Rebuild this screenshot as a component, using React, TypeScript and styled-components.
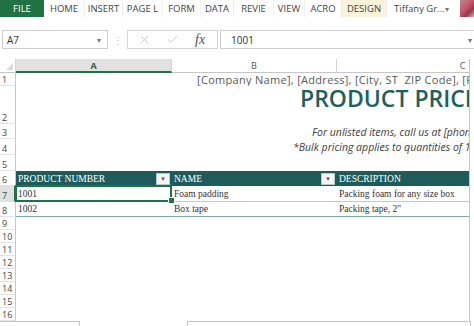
import styled, { createGlobalStyle } from "styled-components";
import { X, Check } from "lucide-react";

const GlobalStyle = createGlobalStyle`
  html, body {
    margin: 0;
    padding: 0;
    background: #ffffff;
    overflow: hidden;
  }
`;

const TEAL = "#1e5c5c";
const GREEN = "#217346";

const tabs = [
  { label: "HOME", w: 41 },
  { label: "INSERT", w: 38 },
  { label: "PAGE L", w: 40 },
  { label: "FORM", w: 38 },
  { label: "DATA", w: 33 },
  { label: "REVIE", w: 40 },
  { label: "VIEW", w: 31 },
  { label: "ACRO", w: 37 },
  { label: "DESIGN", w: 45, active: true },
];

const rowHeights = [13, 38, 15, 16, 16, 15, 16, 15, 13, 13, 13, 13, 13, 13, 13, 13];

export default function App() {
  return (
    <Screen>
      <GlobalStyle />
      <Ribbon>
        <FileTab>FILE</FileTab>
        {tabs.map((t) => (
          <Tab key={t.label} $w={t.w} $active={t.active}>
            {t.label}
          </Tab>
        ))}
        <UserName>Tiffany Gr...</UserName>
        <SmallArrow>▾</SmallArrow>
        <Avatar />
      </Ribbon>

      <FormulaRow>
        <NameBox>
          <span>A7</span>
          <SmallArrow>▾</SmallArrow>
        </NameBox>
        <Dots>⋮</Dots>
        <ButtonBox>
          <X size={13} strokeWidth={1.3} color="#b8b8b8" />
          <Check size={13} strokeWidth={1.3} color="#b8b8b8" />
          <Fx>fx</Fx>
        </ButtonBox>
        <FormulaInput>
          <span>1001</span>
          <SmallArrow>▾</SmallArrow>
        </FormulaInput>
      </FormulaRow>

      <SheetArea>
        <Sheet $rows={rowHeights}>
          <Corner />
          <ColHeader $selected>A</ColHeader>
          <ColHeader>B</ColHeader>
          <ColHeader>C</ColHeader>

          {rowHeights.map((_, i) => (
            <RowHeader key={i} style={{ gridRow: i + 2 }} $selected={i === 6}>
              {i + 1}
            </RowHeader>
          ))}

          <SpanCell style={{ gridRow: 2 }} $indent={181}>
            <CompanyLine>[Company Name], [Address], [City, ST&nbsp; ZIP Code], [Phone]</CompanyLine>
          </SpanCell>
          <SpanCell style={{ gridRow: 3 }} $indent={284} $align="start">
            <Title>PRODUCT PRICE LIST</Title>
          </SpanCell>
          <SpanCell style={{ gridRow: 4 }} $indent={296}>
            <Note>For unlisted items, call us at [phone]</Note>
          </SpanCell>
          <SpanCell style={{ gridRow: 5 }} $indent={277}>
            <Note>*Bulk pricing applies to quantities of 12</Note>
          </SpanCell>

          <HeadCell style={{ gridRow: 7 }}>
            PRODUCT NUMBER
            <FilterButton>▾</FilterButton>
          </HeadCell>
          <HeadCell style={{ gridRow: 7 }}>
            NAME
            <FilterButton>▾</FilterButton>
          </HeadCell>
          <HeadCell style={{ gridRow: 7 }}>DESCRIPTION</HeadCell>

          <DataCell style={{ gridRow: 8 }} $selected>1001</DataCell>
          <DataCell style={{ gridRow: 8 }}>Foam padding</DataCell>
          <DataCell style={{ gridRow: 8 }}>Packing foam for any size box</DataCell>

          <DataCell style={{ gridRow: 9 }} $last>1002</DataCell>
          <DataCell style={{ gridRow: 9 }} $last>Box tape</DataCell>
          <DataCell style={{ gridRow: 9 }} $last>Packing tape, 2"</DataCell>
        </Sheet>
        <VScroll />
      </SheetArea>

      <BottomBar>
        <SheetTabs />
        <HScroll />
      </BottomBar>
    </Screen>
  );
}

const Screen = styled.div`
  width: 474px;
  height: 326px;
  display: flex;
  flex-direction: column;
  background: #ffffff;
  overflow: hidden;
  font-family: "Open Sans", "Liberation Sans", sans-serif;
  color: #444444;
`;

const Ribbon = styled.div`
  height: 17px;
  display: flex;
  align-items: stretch;
  font-size: 9.5px;
  white-space: nowrap;
`;

const FileTab = styled.div`
  width: 44px;
  background: ${GREEN};
  color: #ffffff;
  display: flex;
  align-items: center;
  justify-content: center;
`;

const Tab = styled.div<{ $w: number; $active?: boolean }>`
  width: ${(p) => p.$w}px;
  display: flex;
  align-items: center;
  justify-content: center;
  border-right: 1px solid #f0f0f0;
  box-sizing: border-box;
  background: ${(p) => (p.$active ? "#fbf3d9" : "transparent")};
  color: #444444;
`;

const UserName = styled.div`
  margin-left: 7px;
  display: flex;
  align-items: center;
  color: #444444;
`;

const SmallArrow = styled.span`
  font-size: 8px;
  color: #777777;
  display: flex;
  align-items: center;
`;

const Avatar = styled.div`
  margin-left: auto;
  width: 14px;
  background: linear-gradient(135deg, #b88a8f 0%, #c9536b 45%, #8e3a4c 70%, #d9b0b4 100%);
`;

const FormulaRow = styled.div`
  margin-top: 13px;
  height: 19px;
  display: flex;
  align-items: stretch;
  font-size: 10px;
`;

const NameBox = styled.div`
  margin-left: 2px;
  width: 106px;
  box-sizing: border-box;
  border: 1px solid #cfcfcf;
  display: flex;
  align-items: center;
  justify-content: space-between;
  padding: 0 6px 0 4px;
  color: #333333;
`;

const Dots = styled.div`
  width: 19px;
  display: flex;
  align-items: center;
  justify-content: center;
  color: #bbbbbb;
  font-size: 10px;
`;

const ButtonBox = styled.div`
  width: 91px;
  box-sizing: border-box;
  border: 1px solid #d6d6d6;
  display: flex;
  align-items: center;
  justify-content: space-around;
  padding: 0 4px 0 2px;
`;

const Fx = styled.span`
  font-family: "Liberation Serif", serif;
  font-style: italic;
  font-size: 14px;
  color: #555555;
`;

const FormulaInput = styled.div`
  flex: 1;
  margin-left: 2px;
  box-sizing: border-box;
  border: 1px solid #cfcfcf;
  border-right: none;
  display: flex;
  align-items: center;
  justify-content: space-between;
  padding: 0 2px 0 10px;
  color: #333333;
`;

const SheetArea = styled.div`
  margin-top: 10px;
  height: 262px;
  display: flex;
`;

const Sheet = styled.div<{ $rows: number[] }>`
  width: 469px;
  overflow: hidden;
  display: grid;
  grid-template-columns: 16px 156px 165px 252px;
  grid-template-rows: 14px ${(p) => p.$rows.map((h) => `${h}px`).join(" ")};
  grid-auto-flow: column dense;
`;

const VScroll = styled.div`
  flex: 1;
  border-left: 1px solid #c6c6c6;
`;

const Corner = styled.div`
  grid-row: 1;
  grid-column: 1;
  border-right: 1px solid #d4d4d4;
  border-bottom: 1px solid #c6c6c6;
  position: relative;
  &::after {
    content: "";
    position: absolute;
    right: 2px;
    bottom: 2px;
    border-left: 7px solid transparent;
    border-bottom: 7px solid #dcdcdc;
  }
`;

const ColHeader = styled.div<{ $selected?: boolean }>`
  grid-row: 1;
  display: flex;
  align-items: center;
  justify-content: center;
  font-size: 9px;
  color: ${(p) => (p.$selected ? "#2b5f3f" : "#555555")};
  font-weight: ${(p) => (p.$selected ? 700 : 400)};
  background: ${(p) => (p.$selected ? "#e1e1e1" : "#ffffff")};
  border-right: 1px solid #d4d4d4;
  border-bottom: ${(p) => (p.$selected ? `2px solid ${GREEN}` : "1px solid #c6c6c6")};
  box-sizing: border-box;
`;

const RowHeader = styled.div<{ $selected?: boolean }>`
  grid-column: 1;
  display: flex;
  align-items: flex-end;
  padding-left: 2px;
  font-size: 9px;
  line-height: 11px;
  color: ${(p) => (p.$selected ? "#2b5f3f" : "#444444")};
  background: ${(p) => (p.$selected ? "#e1e1e1" : "#ffffff")};
  border-right: ${(p) => (p.$selected ? `2px solid ${GREEN}` : "1px solid #c6c6c6")};
  border-bottom: 1px solid #e2e2e2;
  box-sizing: border-box;
`;

const SpanCell = styled.div<{ $indent: number; $align?: string }>`
  grid-column: 2 / -1;
  display: flex;
  align-items: ${(p) => (p.$align === "start" ? "flex-start" : "center")};
  padding-left: ${(p) => p.$indent}px;
  white-space: nowrap;
  overflow: hidden;
  min-width: 0;
`;

const CompanyLine = styled.span`
  font-size: 11px;
  letter-spacing: 0.3px;
  color: #595959;
`;

const Title = styled.span`
  font-size: 23px;
  line-height: 24px;
  font-weight: 600;
  letter-spacing: 0;
  color: #1f5f5f;
`;

const Note = styled.span`
  font-size: 10.5px;
  font-style: italic;
  color: #404040;
`;

const HeadCell = styled.div`
  background: ${TEAL};
  color: #ffffff;
  font-family: "Liberation Serif", "DejaVu Serif", serif;
  font-size: 9.5px;
  display: flex;
  align-items: center;
  justify-content: space-between;
  padding: 0 2px 0 2px;
  white-space: nowrap;
`;

const FilterButton = styled.span`
  width: 12px;
  height: 10px;
  background: #f4f4f4;
  border: 1px solid #b8c8c8;
  color: #555555;
  font-size: 7px;
  display: flex;
  align-items: center;
  justify-content: center;
  font-family: "DejaVu Sans", sans-serif;
`;

const DataCell = styled.div<{ $selected?: boolean; $last?: boolean }>`
  position: relative;
  font-family: "Liberation Serif", "DejaVu Serif", serif;
  font-size: 9.5px;
  color: #333333;
  display: flex;
  align-items: center;
  padding-left: 2px;
  white-space: nowrap;
  border-bottom: 1px solid ${(p) => (p.$last ? "#7fa7a7" : "#b9cfcf")};
  ${(p) =>
    p.$selected &&
    `
    &::before {
      content: "";
      position: absolute;
      inset: -1px 0 -1px -1px;
      border: 2px solid ${GREEN};
    }
    &::after {
      content: "";
      position: absolute;
      right: -3px;
      bottom: -3px;
      width: 5px;
      height: 5px;
      background: ${GREEN};
      border: 1px solid #ffffff;
      z-index: 1;
    }
  `}
`;

const BottomBar = styled.div`
  height: 5px;
  display: flex;
`;

const SheetTabs = styled.div`
  width: 79px;
  border-top: 1px solid #c6c6c6;
  border-right: 1px solid #c6c6c6;
`;

const HScroll = styled.div`
  margin-left: 107px;
  width: 282px;
  border-top: 1px solid #c6c6c6;
  border-left: 1px solid #c6c6c6;
  border-right: 1px solid #c6c6c6;
`;
